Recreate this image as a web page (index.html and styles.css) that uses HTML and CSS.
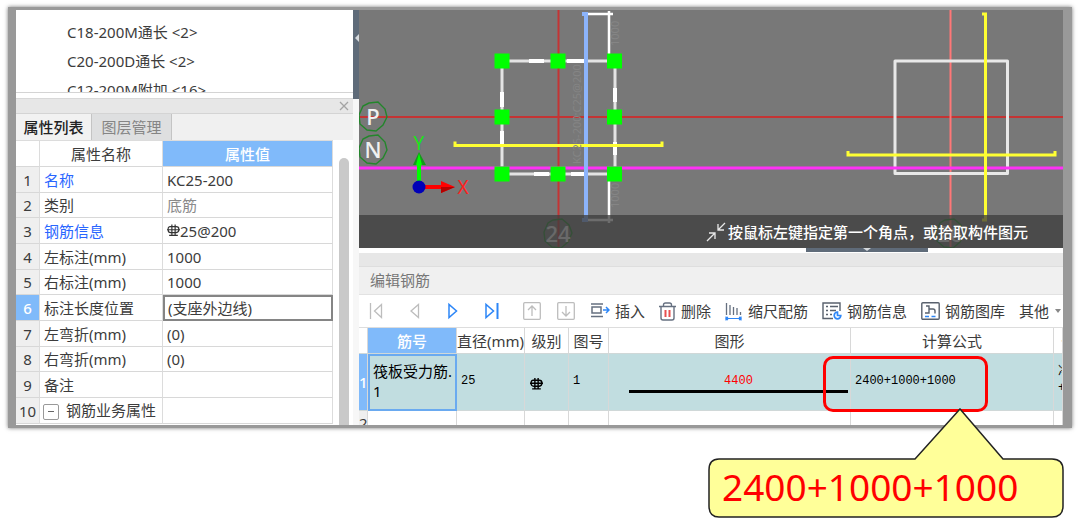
FILE: index.html
```html
<!DOCTYPE html>
<html lang="zh-CN">
<head>
<meta charset="utf-8">
<title>编辑钢筋</title>
<link rel="stylesheet" href="styles.css">
</head>
<body>
<main class="stage">
  <div class="window">
    <aside class="side">
      <ul class="tree">
        <li>C18-200M通长 &lt;2&gt;</li>
        <li>C20-200D通长 &lt;2&gt;</li>
        <li>C12-200M附加 &lt;16&gt;</li>
      </ul>
      <div class="dock-bar">
        <button class="close" type="button" aria-label="关闭"><svg width="10" height="10" viewBox="0 0 10 10"><path d="M1 1l8 8M9 1l-8 8" stroke="#a4a4a4" stroke-width="1.3"/></svg></button>
      </div>
      <div class="tabs">
        <button class="tab tab-active" type="button">属性列表</button>
        <button class="tab" type="button">图层管理</button>
      </div>
      <div class="props-wrap">
        <table class="props">
          <colgroup><col class="c-num"><col class="c-name"><col class="c-value"></colgroup>
          <thead><tr><th></th><th>属性名称</th><th class="selected">属性值</th></tr></thead>
          <tbody>
            <tr><th>1</th><td class="key">名称</td><td>KC25-200</td></tr>
            <tr><th>2</th><td>类别</td><td class="muted">底筋</td></tr>
            <tr><th>3</th><td class="key">钢筋信息</td><td><svg class="grade grade-raised" viewBox="0 0 12 12"><path d="M3.500 2.500H8.500Q11 2.500 11 5T8.500 8H3.500Q1 8 1 5T3.500 2.500zM4.500 .5v10M7.500 .5v10M0 5.300h12M2 10.500h8" fill="none" stroke="#333" stroke-width="1.100"/></svg>25@200</td></tr>
            <tr><th>4</th><td>左标注(mm)</td><td>1000</td></tr>
            <tr><th>5</th><td>右标注(mm)</td><td>1000</td></tr>
            <tr><th class="selected">6</th><td>标注长度位置</td><td class="editing">(支座外边线)</td></tr>
            <tr><th>7</th><td>左弯折(mm)</td><td>(0)</td></tr>
            <tr><th>8</th><td>右弯折(mm)</td><td>(0)</td></tr>
            <tr><th>9</th><td>备注</td><td></td></tr>
            <tr><th>10</th><td class="group"><button class="toggle" type="button" aria-label="折叠"></button>钢筋业务属性</td><td></td></tr>
          </tbody>
        </table>
        <div class="scroll"></div>
      </div>
    </aside>
    <div class="splitter"><div class="grip"><svg width="5" height="8" viewBox="0 0 5 8"><path d="M5 0v8L1 4z" fill="#d5d9dd"/></svg></div></div>
    <section class="work">
      <div class="canvas">
        <svg class="drawing" viewBox="359 10 704 238" preserveAspectRatio="xMinYMin slice">
          <g fill="none">
            <path d="M558.500 10v238M359 117h704" stroke="#c43434" stroke-width="2"/>
            <path d="M950.500 10v238" stroke="#ff7777" stroke-width="2"/>
            <path d="M502 61h113v113H502z" stroke="#e4e4e4" stroke-width="3"/>
            <path d="M529 61h15M567 61h17M534 174h15M571 174h16M502 92v15M502 131v15M615 88v14M615 142v13" stroke="#fff" stroke-width="4"/>
            <path d="M585 14h28M609 11v50M609 174v49M585 220h28" stroke="#fff" stroke-width="2.500"/>
            <path d="M895 61h112.500v112.500H895z" stroke="#e8e8e8" stroke-width="3" stroke-linejoin="round"/>
            <path d="M359 168h704" stroke="#ff30f5" stroke-width="3"/>
            <path d="M582 14h4v206h-4" stroke="#8cb4fb" stroke-width="4"/>
            <path d="M455 141.500v4h207v-4M848 151v4h207v-4M982 14h3.500v206H982" stroke="#ffff33" stroke-width="3"/>
            <path d="M369 103l9-1 7 7 2 8-4 8-7 6-9-1-7-6-1-9 4-9zM369 136l9-1 7 7 2 8-4 8-7 6-9-1-7-6-1-9 4-9zM553 220l9-1 7 6 3 8-4 9-7 6-9-1-7-6-1-9 4-9zM945 220l9-1 7 6 3 8-4 9-7 6-9-1-7-6-1-9 4-9z" stroke="#23862b" stroke-width="1.400"/>
          </g>
          <g class="axis-label"><text x="373" y="125">P</text><text x="373" y="158">N</text><text x="558" y="242">24</text><text x="950" y="242">26</text></g>
          <g class="faint"><text transform="translate(581 164) rotate(-90)">KC25-200:C25@200</text><text transform="translate(619 46) rotate(-90)">1000</text><text transform="translate(619 208) rotate(-90)">1000</text></g>
          <path d="M494.500 53.500h15v15h-15zM550.500 53.500h15v15h-15zM607 53.500h15v15h-15zM494.500 109.500h15v15h-15zM607 109.500h15v15h-15zM494.500 166.500h15v15h-15zM550.500 166.500h15v15h-15zM607 166.500h15v15h-15z" fill="#0f0"/>
          <path d="M413 165l6-13 7 13z" fill="#159a1b"/><path d="M417 184v-19h-1l3-12 3 12h-1v19z" fill="#0f0"/>
          <path d="M425 185h16v-4l14 6-14 6v-4h-16z" fill="#f00"/><path d="M441 187h14l-14 6z" fill="#b40000"/>
          <circle cx="419" cy="187" r="6.500" fill="#0000b8"/>
          <g class="ucs"><text x="419" y="150" fill="#17e617">Y</text><text x="463" y="194" fill="#f22">X</text></g>
        </svg>
        <div class="hint">
          <svg width="20" height="20" viewBox="0 0 20 20"><path d="M1 19l8-8M3 11h6v6M19 1l-7 7M12 2v6h6" fill="none" stroke="#e8e8e8" stroke-width="1.300"/></svg>
          <span>按鼠标左键指定第一个角点，或拾取构件图元</span>
        </div>
      </div>
      <div class="hsplit"><div class="hgrip"><svg width="8" height="4" viewBox="0 0 8 4"><path d="M0 0h8L4 3z" fill="#d5d9dd"/></svg></div></div>
      <div class="panel-bar"></div>
      <h2 class="panel-title">编辑钢筋</h2>
      <div class="toolbar">
        <button class="tool nav" type="button" aria-label="首条"><svg width="14" height="18" viewBox="0 0 14 18"><path d="M1.500 1v16M12.500 2.500v13L5.500 9z" fill="none" stroke="#bdbdbd" stroke-width="1.300"/></svg></button>
        <button class="tool nav" type="button" aria-label="上一条"><svg width="14" height="18" viewBox="0 0 14 18"><path d="M11.500 2.500v13L4 9z" fill="none" stroke="#bdbdbd" stroke-width="1.300"/></svg></button>
        <button class="tool nav" type="button" aria-label="下一条"><svg width="14" height="18" viewBox="0 0 14 18"><path d="M4 2.500v13L11.500 9z" fill="none" stroke="#2d86f7" stroke-width="1.500"/></svg></button>
        <button class="tool nav" type="button" aria-label="末条"><svg width="16" height="18" viewBox="0 0 16 18"><path d="M3 2.500v13L10.500 9z" fill="none" stroke="#2d86f7" stroke-width="1.500"/><path d="M14.500 1v16" stroke="#2d86f7" stroke-width="2"/></svg></button>
        <button class="tool nav nav-move" type="button" aria-label="上移"><svg width="18" height="18" viewBox="0 0 18 18"><rect x=".7" y=".7" width="16.600" height="16.600" rx="1" fill="none" stroke="#bdbdbd" stroke-width="1.300"/><path d="M9 14V4.500M5 8l4-4 4 4" fill="none" stroke="#bdbdbd" stroke-width="1.300"/></svg></button>
        <button class="tool nav nav-move" type="button" aria-label="下移"><svg width="18" height="18" viewBox="0 0 18 18"><rect x=".7" y=".7" width="16.600" height="16.600" rx="1" fill="none" stroke="#bdbdbd" stroke-width="1.300"/><path d="M9 4v9.500M5 10l4 4 4-4" fill="none" stroke="#bdbdbd" stroke-width="1.300"/></svg></button>
        <button class="tool label-tool" type="button"><svg width="19" height="18" viewBox="0 0 19 18"><path d="M0 2h12M0 14.500h12M1 5h9v6H1z" fill="none" stroke="#667080" stroke-width="1.500"/><path d="M12 8h6M15 5l3 3-3 3" fill="none" stroke="#2d86f7" stroke-width="1.500"/></svg>插入</button>
        <button class="tool label-tool" type="button"><svg width="17" height="19" viewBox="0 0 17 19"><path d="M0 4.500h17M2 4.500V16q0 2 2 2h9q2 0 2-2V4.500M4.500 4V3q0-2 2-2h4q2 0 2 2v1" fill="none" stroke="#667080" stroke-width="1.400"/><path d="M6.500 8v7M10.500 8v7" stroke="#e85050" stroke-width="2"/></svg>删除</button>
        <button class="tool label-tool" type="button"><svg width="18" height="19" viewBox="0 0 18 19"><path d="M1.500 1v12M5 3v10M8.500 5v8M12 6v7M15.500 10v3" stroke="#667080" stroke-width="1.300"/><path d="M1 16.500h15M1 14.500v4M16 14.500v4M3 15l-2 1.500L3 18M14 15l2 1.500-2 1.500" fill="none" stroke="#2d86f7" stroke-width="1.200"/></svg>缩尺配筋</button>
        <button class="tool label-tool" type="button"><svg width="20" height="18" viewBox="0 0 20 18"><path d="M18 9V1H1v15.500h10" fill="none" stroke="#59616d" stroke-width="1.400"/><path d="M4 4.500h2M8 4.500h8M4 8.500h2M8 8.500h6M4 12.500h2M8 12.500h2" stroke="#59616d" stroke-width="1.400"/><path d="M18.800 13.500a3.300 3.300 0 1 1-3.300-3.300v3.300z" fill="none" stroke="#2d86f7" stroke-width="1.700"/></svg>钢筋信息</button>
        <button class="tool label-tool" type="button"><svg width="19" height="18" viewBox="0 0 19 18"><rect x=".8" y=".8" width="17.400" height="16.400" rx="1" fill="none" stroke="#59616d" stroke-width="1.400"/><path d="M5 4h3v7H4M8 7h4q2 0 2 2v2.500" fill="none" stroke="#59616d" stroke-width="1.400"/><path d="M4 14.500h4M10.500 14.500h4" stroke="#2d86f7" stroke-width="1.500"/></svg>钢筋图库</button>
        <button class="tool t-more" type="button">其他<svg width="6" height="4" viewBox="0 0 6 4"><path d="M0 0h6L3 4z" fill="#888"/></svg></button>
      </div>
      <div class="bars-wrap">
        <table class="bars">
          <colgroup><col class="b-num"><col class="b-name"><col class="b-dia"><col class="b-grade"><col class="b-fig"><col class="b-shape"><col class="b-formula"><col class="b-desc"></colgroup>
          <thead><tr><th></th><th class="selected">筋号</th><th>直径(mm)</th><th>级别</th><th>图号</th><th>图形</th><th>计算公式</th><th class="cut">公式描述</th></tr></thead>
          <tbody>
            <tr class="current">
              <th class="selected">1</th>
              <td class="bar-name">筏板受力筋.<br>1</td>
              <td class="mono">25</td>
              <td class="grade-cell"><svg class="grade" viewBox="0 0 12 12"><path d="M3.500 3H8.500Q11 3 11 5.500T8.500 8.500H3.500Q1 8.500 1 5.500T3.500 3zM4.500 1v10M7.500 1v10M0 5.800h12M2 11h8" fill="none" stroke="#000" stroke-width="1.300"/></svg></td>
              <td class="mono">1</td>
              <td class="shape"><div class="length">4400</div></td>
              <td class="mono">2400+1000+1000</td>
              <td class="desc">净长<br>+左</td>
            </tr>
            <tr class="next"><th>2</th><td></td><td></td><td></td><td></td><td></td><td></td><td></td></tr>
          </tbody>
        </table>
      </div>
    </section>
  </div>
  <div class="marker"></div>
  <div class="callout">
    <svg class="callout-shape" viewBox="0 0 356 110"><path d="M11 51H207L252 1 295 51H344Q355 51 355 62V98Q355 109 344 109H11Q1 109 1 98V62Q1 51 11 51Z" fill="#ffff99" stroke="#222" stroke-width="1.500"/></svg>
    <p class="callout-text">2400+1000+1000</p>
  </div>
</main>
</body>
</html>
```
FILE: styles.css
```css
* { box-sizing: border-box; }
body {
  margin: 0;
  background: #fff;
  color: #3c3c3c;
  font: 15px/20px "Noto Sans", "Noto Sans CJK SC", sans-serif;
}
button {
  border: 0;
  padding: 0;
  background: none;
  color: inherit;
  font: inherit;
}
svg { display: block; }
table { border-collapse: separate; border-spacing: 0; table-layout: fixed; }
th { font-weight: 400; }

.stage { position: relative; padding: 7px 8px 0; min-height: 518px; }
.window {
  display: grid;
  grid-template-columns: 337px 6px 1fr;
  height: 421px;
  border: solid #999;
  border-width: 3px 9px 3px 8px;
  box-shadow: 0 0 4px #777;
  overflow: hidden;
  background: #fff;
}

.side { display: flex; flex-direction: column; min-height: 0; overflow: hidden; }
.tree {
  margin: 0 0 5px;
  padding: 8px 0 0 51px;
  height: 83px;
  flex: none;
  list-style: none;
  line-height: 29px;
  overflow: hidden;
  border-bottom: 1px solid #d4d4d4;
}
.dock-bar {
  display: flex;
  justify-content: flex-end;
  align-items: center;
  flex: none;
  height: 15px;
  padding-right: 4px;
  background: #e7e7e7;
  border-top: 1px solid #d8d8d8;
}
.tabs { display: flex; flex: none; height: 27px; background: #f0f0f0; border-top: 1px solid #d4d4d4; }
.tab {
  width: 80px;
  background: #dedfe0;
  color: #858585;
  border-right: 1px solid #c4c4c4;
}
.tab-active { width: 76px; background: #f2f2f2; color: #222; font-weight: 500; }
.props-wrap { display: flex; flex: 1; min-height: 0; }
.props { width: 317px; flex: none; align-self: flex-start; }
.props th, .props td {
  height: 26px;
  padding: 0 0 0 4px;
  border-right: 1px solid #dcdcdc;
  border-bottom: 1px solid #d8d8d8;
  text-align: left;
  line-height: 18px;
  white-space: nowrap;
}
.props tbody tr:nth-child(3n+2) > * { height: 25px; }
.props thead th { height: 27px; padding: 0; text-align: center; border-top: 1px solid #dcdcdc; }
.props tbody th { padding: 0; text-align: center; background: #efefef; }
.c-num { width: 24px; }
.c-name { width: 123px; }
.c-value { width: 170px; }
.props .key { color: #2a66ff; }
.props .muted { color: #8a8a8a; }
.props .editing { border: 2px solid #858585; padding-left: 3px; }
.props .group { padding-left: 3px; }
.props .selected, .bars .selected {
  background: #80bafa;
  color: #fff;
  font-weight: 500;
}
.grade { display: inline-block; width: 13px; height: 13px; vertical-align: middle; }
.props .grade-raised { vertical-align: 0; }
.toggle {
  position: relative;
  width: 16px;
  height: 16px;
  margin-right: 7px;
  border: 1px solid #999;
  border-radius: 2px;
  vertical-align: middle;
}
.toggle::before { content: ""; position: absolute; left: 4px; top: 6px; width: 6px; height: 1px; background: #666; }
.scroll { width: 10px; margin: 18px 0 0 6px; background: #c9c9c9; border-radius: 5px 5px 0 0; }

.splitter { background: #f7f7f7; }
.grip { display: flex; justify-content: flex-end; height: 89px; padding-top: 24px; background: #5f6b79; }

.work { display: flex; flex-direction: column; min-width: 0; min-height: 0; overflow: hidden; }
.canvas { position: relative; flex: none; height: 238px; background: #787878; overflow: hidden; }
.drawing { width: 100%; height: 238px; }
.axis-label { font-size: 22px; font-weight: 500; fill: #f0f0f0; text-anchor: middle; }
.faint { font-size: 11px; fill: #858585; }
.ucs { font-size: 19px; text-anchor: middle; }
.hint {
  position: absolute;
  inset: auto 0 0 0;
  display: flex;
  justify-content: flex-end;
  align-items: center;
  gap: 2px;
  height: 33px;
  padding-right: 35px;
  background: rgba(60, 60, 60, .75);
  color: #fff;
  font-weight: 500;
}
.hsplit { flex: none; height: 5px; }
.hgrip { display: flex; justify-content: center; width: 122px; height: 4px; margin-left: 447px; background: #5f6b79; }
.panel-bar { flex: none; height: 14px; background: #e7e7e7; border-bottom: 1px solid #dedede; }
.panel-title {
  flex: none;
  height: 28px;
  margin: 0;
  padding: 0 11px;
  background: #f0f0f0;
  color: #777;
  font-size: 15px;
  font-weight: 400;
  line-height: 27px;
  border-bottom: 1px solid #e2e2e2;
}
.toolbar { display: flex; align-items: center; flex: none; height: 33px; padding-left: 10px; white-space: nowrap; border-bottom: 1px solid #ddd; }
.tool { display: flex; align-items: center; flex: none; gap: 5px; }
.nav { margin-right: 24px; }
.nav-move { margin-right: 16px; }
.label-tool { margin-right: 14px; }
.t-more { gap: 6px; }

.bars-wrap { flex: 1; min-height: 0; overflow: hidden; }
.bars { width: 100%; min-width: 704px; }
.b-num { width: 9px; }
.b-name { width: 89px; }
.b-dia { width: 68px; }
.b-grade { width: 44px; }
.b-fig { width: 40px; }
.b-shape { width: 242px; }
.b-formula { width: 203px; }
.bars th, .bars td {
  padding: 0;
  border-right: 1px solid #d8d8d8;
  border-bottom: 1px solid #d0d8d8;
  white-space: nowrap;
  overflow: hidden;
}
.bars thead th { height: 26px; text-align: center; }
.bars .cut { padding-left: 7px; text-align: left; }
.current td { height: 57px; background: #c1dde0; color: #000; }
.current .bar-name { padding: 0 0 4px 3px; border: 2px solid #6aaaf0; }
.bars .mono { padding: 0 0 2px 4px; font-family: "Liberation Mono", "Noto Sans CJK SC", monospace; font-size: 12px; }
.bars .grade-cell { padding-left: 5px; }
.bars .shape { padding: 0 2px 0 20px; }
.length {
  border-bottom: 3px solid #000;
  color: #f00;
  text-align: center;
  font: 12px/18px "Liberation Mono", monospace;
}
.bars .desc { padding: 0 0 4px 4px; font-family: "Liberation Mono", "Noto Sans CJK SC", monospace; font-size: 12px; line-height: 16px; }
.next th { background: #efefef; }
.next th, .next td { height: 24px; }

.marker {
  position: absolute;
  left: 823px;
  top: 356px;
  width: 165px;
  height: 56px;
  border: 3px solid #f00;
  border-radius: 10px;
}
.callout { position: absolute; left: 708px; top: 408px; width: 356px; height: 110px; }
.callout-shape { position: absolute; inset: 0; width: 100%; height: 100%; }
.callout-text {
  position: relative;
  margin: 0;
  padding: 54px 0 0 14px;
  color: #f00;
  font-size: 37px;
  line-height: 50px;
}
```
